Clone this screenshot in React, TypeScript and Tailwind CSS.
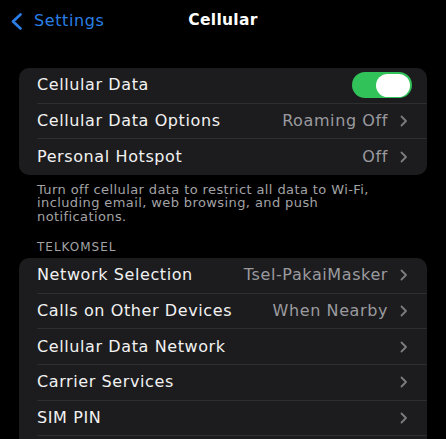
import React from "react";

function Chevron() {
  return (
    <svg width="8" height="12" viewBox="0 0 8 12" className="ml-[12px] shrink-0">
      <path d="M1.5 1.5 L6 6 L1.5 10.5" fill="none" stroke="#7c7c80" strokeWidth="1.8" strokeLinecap="round" strokeLinejoin="round" />
    </svg>
  );
}

function Row({ label, value, last, toggle, h }: { label: string; value?: string; last?: boolean; toggle?: boolean; h?: string }) {
  return (
    <div className={"flex items-stretch pl-[18px] " + (h === "36" ? "h-[35.7px]" : "h-[35.5px]")}>
      <div className={"flex flex-1 items-center pr-[19px] " + (last ? "" : "border-b border-[#2e2e31]")}>
        <span className="flex-1 text-[16px] tracking-[0.6px] text-[#f2f2f2]">{label}</span>
        {toggle ? (
          <div className="mr-[-4px] flex h-[26px] w-[60px] items-center justify-end rounded-full bg-[#31c25a] pr-[2px]">
            <div className="h-[23px] w-[34px] rounded-full bg-white" />
          </div>
        ) : (
          <>
            {value && <span className="text-[16px] tracking-[0.6px] text-[#9a9a9e]">{value}</span>}
            {label && <Chevron />}
          </>
        )}
      </div>
    </div>
  );
}

export default function App() {
  return (
    <div className="h-[439px] w-[446px] overflow-hidden bg-black" style={{ fontFamily: '"DejaVu Sans", Verdana, sans-serif' }}>
      <div className="relative flex h-[42px] items-center">
        <div className="flex items-center pl-[10px]">
          <svg width="13" height="17" viewBox="0 0 13 17">
            <path d="M10.5 1.5 L3 8.5 L10.5 15.5" fill="none" stroke="#2a7fe6" strokeWidth="2.6" strokeLinecap="round" strokeLinejoin="round" />
          </svg>
          <span className="ml-[11px] text-[16px] tracking-[0.6px] text-[#2a7fe6]">Settings</span>
        </div>
        <div className="absolute left-0 right-0 top-0 flex h-[42px] items-center justify-center">
          <span className="text-[15.5px] font-bold tracking-[0.3px] text-white">Cellular</span>
        </div>
      </div>
      <div className="h-[26px]" />
      <div className="mx-[19px] overflow-hidden rounded-[10px] bg-[#1c1c1e]">
        <Row label="Cellular Data" toggle />
        <Row label="Cellular Data Options" value="Roaming Off" />
        <Row label="Personal Hotspot" value="Off" last />
      </div>
      <div className="pl-[37px] pr-[60px] pt-[8px] text-[13px] leading-[13.5px] tracking-[0.4px] text-[#a3a3a6]">
        Turn off cellular data to restrict all data to Wi-Fi, including email, web browsing, and push notifications.
      </div>
      <div className="px-[37px] pt-[18px] text-[12px] leading-[13px] tracking-[1px] text-[#a3a3a6]">TELKOMSEL</div>
      <div className="mx-[19px] mt-[4px] overflow-hidden rounded-[10px] bg-[#1c1c1e]">
        <Row h="36" label="Network Selection" value="Tsel-PakaiMasker" />
        <Row h="36" label="Calls on Other Devices" value="When Nearby" />
        <Row h="36" label="Cellular Data Network" />
        <Row h="36" label="Carrier Services" />
        <Row h="36" label="SIM PIN" />
        <Row h="36" label="" last />
      </div>
    </div>
  );
}
